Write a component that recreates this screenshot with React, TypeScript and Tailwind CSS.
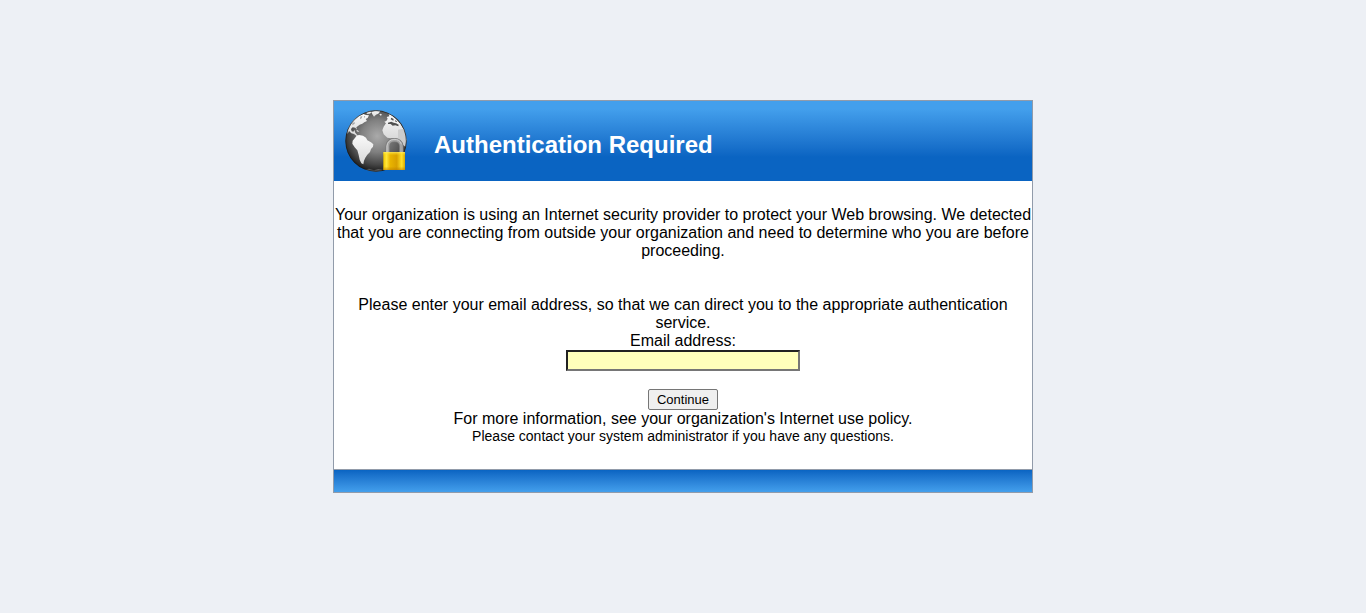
function GlobeLock() {
  return (
    <svg className="size-16 shrink-0" viewBox="42 39 192 192" aria-hidden="true">
      <defs>
        <radialGradient id="globe" cx="0.52" cy="0.42" r="0.58">
          <stop offset="0" stopColor="#aaaaaa" />
          <stop offset="0.45" stopColor="#808080" />
          <stop offset="0.8" stopColor="#464646" />
          <stop offset="1" stopColor="#1c1c1c" />
        </radialGradient>
        <linearGradient id="land" x1="0" y1="0" x2="0" y2="1">
          <stop offset="0" stopColor="#fafafa" />
          <stop offset="1" stopColor="#d8d8d8" />
        </linearGradient>
        <linearGradient id="gold" x1="0" y1="0" x2="1" y2="0">
          <stop offset="0" stopColor="#f3c800" />
          <stop offset="0.15" stopColor="#ffe63a" />
          <stop offset="0.32" stopColor="#e9b400" />
          <stop offset="0.62" stopColor="#d9a000" />
          <stop offset="0.85" stopColor="#ffe22a" />
          <stop offset="1" stopColor="#d8a800" />
        </linearGradient>
        <linearGradient id="goldShade" x1="0" y1="0" x2="0" y2="1">
          <stop offset="0" stopColor="#fff27a" stopOpacity="0.7" />
          <stop offset="0.2" stopColor="#ffd800" stopOpacity="0" />
          <stop offset="0.8" stopColor="#c08000" stopOpacity="0" />
          <stop offset="1" stopColor="#b87800" stopOpacity="0.6" />
        </linearGradient>
        <clipPath id="sphere">
          <circle cx="138" cy="135" r="92" />
        </clipPath>
      </defs>
      <circle cx="138" cy="135" r="92" fill="url(#globe)" />
      <g clipPath="url(#sphere)">
        <g fill="url(#land)">
          <path d="M52 108 L57 92 L70 73 L86 60 L100 54 L108 57 L117 58 L113 66 L107 69 L111 75 L103 79 L97 83 L89 86 L83 91 L79 94 L81 101 L76 95 L68 94 L63 99 L65 106 L70 107 L74 102 L75 109 L79 114 L84 119 L80 120 L72 114 L64 112 L57 105 L53 114Z" />
          <path d="M109 50 L119 46 L125 48 L120 53 L111 54Z" />
          <path d="M124 47 L136 44 L151 46 L145 53 L138 56 L132 62 L127 55Z" />
          <path d="M148 55 L153 53 L156 57 L151 59Z" />
          <path d="M80 119 L87 117 L99 119 L108 125 L112 133 L123 139 L130 145 L129 152 L123 159 L120 168 L112 176 L106 185 L102 194 L100 205 L94 202 L89 191 L86 177 L82 163 L74 154 L67 143 L68 134 L73 128Z" />
          <path d="M163 77 L169 75 L173 68 L170 63 L178 61 L176 54 L184 58 L197 68 L211 83 L222 101 L214 110 L210 122 L204 129 L193 126 L183 127 L172 125 L161 115 L157 103 L161 92 L168 82Z" />
          <path d="M78 104 L83 103 L88 107 L83 107Z" />
          <path d="M105 221 L117 218 L132 223 L145 219 L159 221 L150 228 L120 229Z" fillOpacity="0.25" />
        </g>
        <path d="M204 101 L222 98 L230 130 L226 152 L214 143 L204 129Z" fill="#cccccc" />
        <path d="M174 80 L184 77 L191 80 L198 82 L206 86 L205 91 L196 88 L188 89 L182 84 L174 84Z M184 65 L191 69 L190 74 L182 70Z M195 71 L202 77 L197 78Z" fill="#505050" />
        <path d="M66 83 L73 78 L75 82 L68 88Z M91 62 L97 60 L95 67 L90 70Z M102 60 L106 61 L102 67Z" fill="#a6a6a6" />
        <circle cx="138" cy="135" r="91" fill="none" stroke="#171717" strokeWidth="3" strokeOpacity="0.65" />
      </g>
      <path d="M173 170 V151 C173 126 214 126 214 151 V170" fill="#555555" fillOpacity="0.35" stroke="#777777" strokeWidth="13" />
      <path d="M173 170 V151 C173 126 214 126 214 151 V170" fill="none" stroke="#a4a4a4" strokeWidth="9" />
      <path d="M171 168 V150 C172 125 211 124 214 145" fill="none" stroke="#cccccc" strokeWidth="3" />
      <rect x="160" y="168" width="65" height="54" rx="1" fill="url(#gold)" />
      <rect x="160" y="168" width="65" height="54" rx="1" fill="url(#goldShade)" />
    </svg>
  );
}

export default function App() {
  return (
    <div className="min-h-screen bg-[#edf0f5] px-4 py-[100px] font-['Liberation_Sans',Arial,sans-serif] text-base leading-[18px] text-black">
      <main className="mx-auto max-w-[700px] border border-[#919baa] bg-white text-center">
        <header className="flex h-20 items-center gap-[26px] bg-linear-to-b from-[#439fec] from-10% to-[#0a64c2] to-70% px-2.5">
          <GlobeLock />
          <h1 className="pt-2 text-2xl font-bold text-white">Authentication Required</h1>
        </header>
        <form className="py-[25px]" onSubmit={(event) => event.preventDefault()}>
          <p>
            Your organization is using an Internet security provider to protect your Web browsing. We detected that you
            are connecting from outside your organization and need to determine who you are before proceeding.
          </p>
          <p className="mt-9 px-4">
            Please enter your email address, so that we can direct you to the appropriate authentication service.
          </p>
          <label htmlFor="email" className="block">
            Email address:
          </label>
          <input
            id="email"
            name="email"
            type="text"
            className="mx-auto block h-[21px] w-[234px] border-2 border-t-[#212121] border-r-[#767676] border-b-[#767676] border-l-[#212121] bg-[#ffffbb] px-0.5 text-[13px]"
          />
          <button
            type="submit"
            className="mx-auto mt-[18px] block h-[21px] rounded-xs border border-[#767676] bg-[#efefef] px-2 text-[13px] leading-4"
          >
            Continue
          </button>
          <p>For more information, see your organization&apos;s Internet use policy.</p>
          <p className="text-sm leading-4">Please contact your system administrator if you have any questions.</p>
        </form>
        <footer className="h-[23px] border-t border-[#919baa] bg-linear-to-b from-[#0a64c2] to-[#439fec]" />
      </main>
    </div>
  );
}
